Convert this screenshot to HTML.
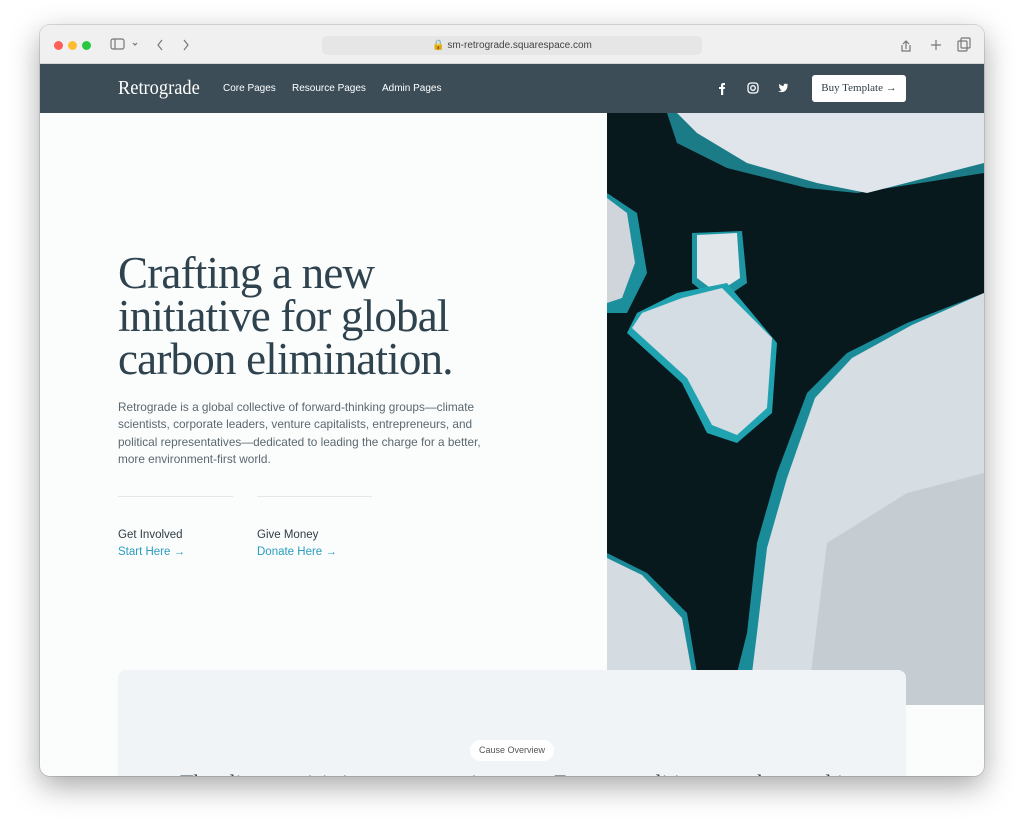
<!DOCTYPE html>
<html><head><meta charset="utf-8"><style>
*{margin:0;padding:0;box-sizing:border-box}
body{width:1024px;height:830px;background:#fff;position:relative;overflow:hidden;font-family:"Liberation Sans",sans-serif}
.win{position:absolute;left:40px;top:25px;width:944px;height:751px;background:#fbfcfc;border-radius:10px;overflow:hidden;box-shadow:0 10px 30px rgba(0,0,0,.35),0 0 0 1px rgba(0,0,0,.12)}
.tb{position:absolute;left:0;top:0;width:944px;height:39px;background:#f0f0f0;border-bottom:1px solid #d5d5d5}
.dot{position:absolute;top:16px;width:9px;height:9px;border-radius:50%}
.url{position:absolute;left:282px;top:11px;width:380px;height:19px;background:#e6e6e6;border-radius:5px;font-size:10px;color:#444;text-align:center;line-height:19px}
.nav{position:absolute;left:0;top:39px;width:944px;height:49px;background:#3c4d57;color:#fff}
.nav .logo{position:absolute;left:78px;top:13px;font-family:"Liberation Serif",serif;font-size:20px;transform:scaleX(.92);transform-origin:left}
.nav .lk{position:absolute;top:19px;font-size:10px}
.btn{position:absolute;left:772px;top:11px;width:94px;height:27px;background:#fff;border-radius:3px;color:#2e3d46;font-family:"Liberation Serif",serif;font-size:11px;text-align:center;line-height:27px}
h1{position:absolute;left:78px;top:227px;font-family:"Liberation Serif",serif;font-weight:normal;font-size:45px;line-height:43px;color:#2f434f;letter-spacing:-0.8px;white-space:nowrap}
.p{position:absolute;left:78px;top:374px;width:380px;font-size:11.8px;line-height:17.3px;color:#5a6870}
.hr{position:absolute;top:471px;width:115px;height:1px;background:#e2e7ea}
.c1{position:absolute;top:504px;font-size:11.5px;color:#2e3d46}
.c2{position:absolute;top:521px;font-size:11.5px;color:#2a9cc0}
.card{position:absolute;left:78px;top:645px;width:788px;height:120px;background:#f0f4f7;border-radius:8px;overflow:hidden}
.pill{position:absolute;left:352px;top:70px;width:84px;height:21px;background:#fff;border-radius:11px;font-size:9px;color:#555;text-align:center;line-height:21px}
.ct{position:absolute;left:62px;top:100px;font-family:"Liberation Serif",serif;font-size:22px;color:#2f434f;white-space:nowrap}
</style></head><body>
<div class="win">
<div class="tb">
<div class="dot" style="left:14px;background:#fe5f57"></div><div class="dot" style="left:28px;background:#febc2e"></div><div class="dot" style="left:42px;background:#28c840"></div>
<svg style="position:absolute;left:70px;top:13px" width="80" height="14" fill="none" stroke="#777" stroke-width="1.2"><rect x="1" y="1" width="13" height="10" rx="2"/><line x1="5" y1="1" x2="5" y2="11"/><path d="M23 5l2 2 2-2M52 2l-4 5 4 5M74 2l4 5-4 5"/></svg>
<div class="url">🔒 sm-retrograde.squarespace.com</div>
<svg style="position:absolute;left:860px;top:12px" width="80" height="16" fill="none" stroke="#777" stroke-width="1.2"><path d="M6 4v8M3 7l3-3 3 3M2 8v6h8V8"/><path d="M36 3v10M31 8h10"/><rect x="58" y="4" width="9" height="10" rx="1"/><rect x="61" y="1" width="9" height="10" rx="1"/></svg>
</div>
<div class="nav">
<div class="logo">Retrograde</div>
<div class="lk" style="left:183px">Core Pages</div>
<div class="lk" style="left:252px">Resource Pages</div>
<div class="lk" style="left:342px">Admin Pages</div>
<svg style="position:absolute;left:676px;top:18px" width="72" height="13" fill="#fff"><path d="M5 13V7H3V5h2V3.5C5 1.5 6 1 7.5 1H9v2H8c-.6 0-.8.3-.8.8V5H9l-.3 2H7.2v6z"/><rect x="32" y="1" width="10" height="10" rx="3" fill="none" stroke="#fff" stroke-width="1.3"/><circle cx="37" cy="6" r="2.3" fill="none" stroke="#fff" stroke-width="1.3"/><path d="M72 2.5c-.4.2-.8.3-1.2.3.5-.3.8-.7 1-1.2-.4.2-.9.4-1.3.5C69.6 1.1 67.6 1.7 67.6 3.6v.4C65.8 4 64.3 3.1 63.2 1.9c-.6 1 0 2.3.8 2.8-.4 0-.7-.1-1-.3 0 1.1.8 2 1.8 2.2-.4.1-.7.1-1 0 .3.9 1.1 1.5 2 1.5-1 .8-2.4 1.2-3.7 1 4.5 2.6 9.4-.1 9.4-5.6V3.2c.4-.2.7-.4.9-.7z"/></svg>
<div class="btn">Buy Template →</div>
</div>
<h1>Crafting a new<br>initiative for global<br>carbon elimination.</h1>
<div class="p">Retrograde is a global collective of forward-thinking groups—climate scientists, corporate leaders, venture capitalists, entrepreneurs, and political representatives—dedicated to leading the charge for a better, more environment-first world.</div>
<div class="hr" style="left:78px"></div><div class="hr" style="left:217px"></div>
<div class="c1" style="left:78px">Get Involved</div><div class="c1" style="left:217px">Give Money</div>
<div class="c2" style="left:78px">Start Here →</div><div class="c2" style="left:217px">Donate Here →</div>
<svg style="position:absolute;left:567px;top:88px" width="377" height="592" viewBox="0 0 377 592">
<rect width="377" height="592" fill="#07191d"/>
<path d="M60 0H377V60L250 80 200 75 120 55 70 30Z" fill="#1b7c88"/>
<path d="M70 0H377V50L260 80 210 70 140 50 90 20Z" fill="#dfe5ea"/>
<path d="M0 80L30 100 40 160 20 200 0 200Z" fill="#1b8f9c"/>
<path d="M0 85L20 100 28 150 15 185 0 190Z" fill="#cfd5da"/>
<path d="M85 120L135 118 140 170 110 190 85 170Z" fill="#1d95a2"/>
<path d="M90 122L130 120 133 165 110 180 90 165Z" fill="#e0e6ea"/>
<path d="M70 180L120 170 170 230 165 300 130 330 100 320 75 270 20 220 30 200Z" fill="#20a3b0"/>
<path d="M75 185L115 175 165 225 160 295 130 322 105 312 80 265 25 215 35 200Z" fill="#d3dde3"/>
<path d="M377 180L300 210 240 240 200 280 170 360 150 430 140 520 130 560 150 592H377Z" fill="#1a8b98"/>
<path d="M377 180L305 212 245 245 208 285 180 365 160 435 150 520 145 560 160 592H377Z" fill="#d7dee3"/>
<path d="M0 440L40 460 80 500 90 560 80 592H0Z" fill="#1a8b98"/>
<path d="M0 445L35 462 75 505 85 560 75 592H0Z" fill="#d5dce1"/>
<path d="M220 430L300 380 377 360V592H200Z" fill="#b9c2c8" opacity=".6"/>
</svg>
<div class="card"><div class="pill">Cause Overview</div><div class="ct">The climate crisis is at an urgent juncture. For our coalition to make a real impact, we f</div></div>
</div>
</body></html>
